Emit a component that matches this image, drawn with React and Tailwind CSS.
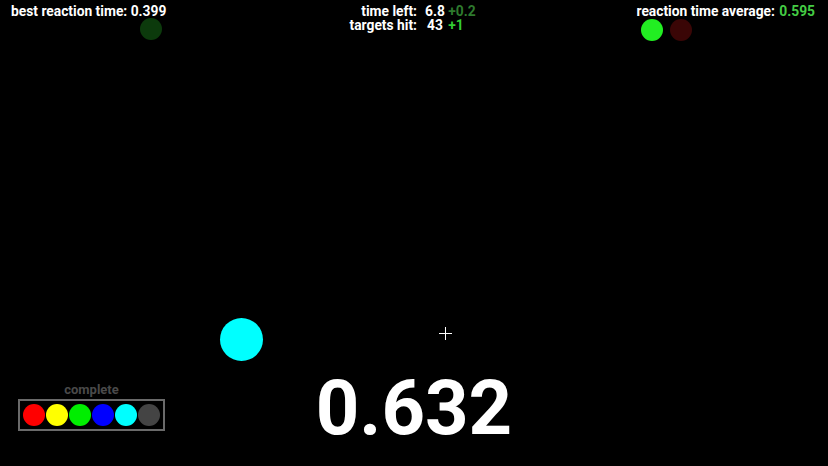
export default function App() {
  const swatches = ['#ff0000', '#ffff00', '#00ee00', '#0000ff', '#00ffff', '#444444'];

  return (
    <div className="w-[828px] h-[466px] bg-black text-white flex flex-col overflow-hidden" style={{ fontFamily: 'Roboto, "Liberation Sans", sans-serif' }}>
      {/* HUD */}
      <div className="grid grid-cols-3 items-start font-bold text-[13.8px] leading-[14px]">
        <div className="pl-[11px] pt-[4px]">
          <div className="whitespace-nowrap">best reaction time: 0.399</div>
          <div className="ml-[129px] w-[22px] h-[22px] rounded-full bg-[#0c3a0c]"></div>
        </div>
        <div className="pt-[4px] grid grid-cols-2 content-start gap-x-[8px] pl-[14px]">
          <div className="text-right">time left:</div>
          <div>
            6.8 <span className="text-[#2e7a2e]">+0.2</span>
          </div>
          <div className="text-right">targets hit:</div>
          <div className="pl-[2px]">
            43 <span className="text-[#33cc33] ml-[2px]">+1</span>
          </div>
        </div>
        <div className="pt-[4px] flex flex-col items-end pr-[13px]">
          <div>
            <div className="whitespace-nowrap">
              reaction time average: <span className="text-[#44cc44] ml-[1px]">0.595</span>
            </div>
            <div className="mt-[1px] ml-[5px] flex gap-[7px]">
              <div className="w-[22px] h-[22px] rounded-full bg-[#22ee22]"></div>
              <div className="w-[22px] h-[22px] rounded-full bg-[#3a0606]"></div>
            </div>
          </div>
        </div>
      </div>

      {/* play field */}
      <div className="relative flex-1">
        <div className="absolute left-[220px] top-[277px] w-[43px] h-[43px] rounded-full bg-[#00ffff]"></div>
        <div className="absolute left-[439px] top-[286px] w-[13px] h-[13px]">
          <div className="absolute left-[6px] top-0 w-px h-[13px] bg-white"></div>
          <div className="absolute top-[6px] left-0 h-px w-[13px] bg-white"></div>
        </div>
      </div>

      {/* bottom */}
      <div className="grid grid-cols-[1fr_auto_1fr] items-end h-[96px]">
        <div className="pl-[18px] pb-[38px]">
          <div className="w-[147px] text-center text-[13px] leading-[13px] font-bold text-[#4a4a4a] mb-[3px]">complete</div>
          <div className="w-[147px] h-[32px] border-2 border-[#6a6a6a] flex items-center gap-[1px] pl-[3px]">
            {swatches.map((c, i) => (
              <div key={i} className="w-[22px] h-[22px] rounded-full" style={{ background: c }}></div>
            ))}
          </div>
        </div>
        <div className="text-[76px] leading-[76px] font-bold pb-[23px]">0.632</div>
        <div></div>
      </div>
    </div>
  );
}
